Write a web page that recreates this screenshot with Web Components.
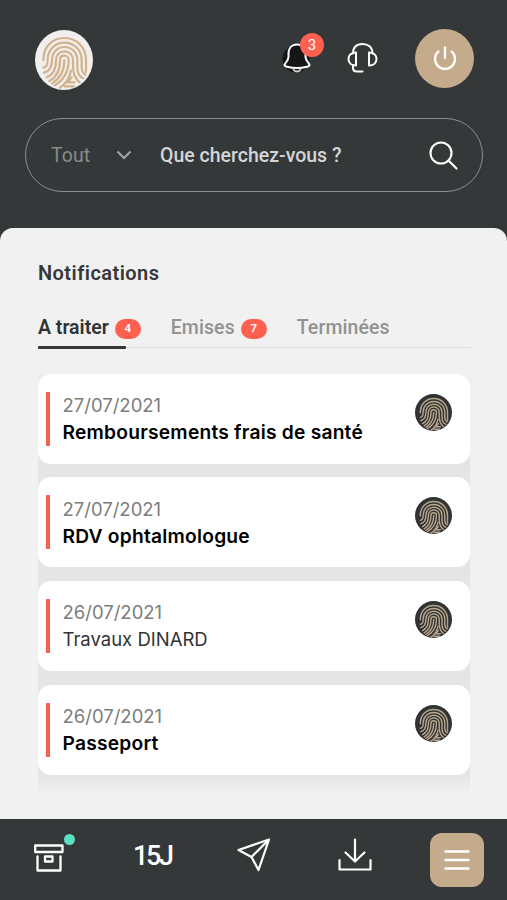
<!DOCTYPE html>
<html lang="fr">
<head>
<meta charset="utf-8">
<title>Notifications</title>
<style>
html,body{margin:0;height:100%}
body{background:#353839;font-family:Roboto,"Liberation Sans",sans-serif;overflow:hidden}
</style>
</head>
<body>
<portal-app></portal-app>
<script>
const define = (name, render) => customElements.define(name, class extends HTMLElement {
  constructor() {
    super();
    this.attachShadow({ mode: "open" });
  }
  connectedCallback() {
    this.shadowRoot.innerHTML = render(this);
  }
});

define("finger-print", () => `
<style>
:host{display:block;border-radius:50%;overflow:hidden;flex:none}
svg{display:block;width:100%;height:100%}
</style>
<svg viewBox="45 31 174 174" fill="none" stroke="var(--line)" stroke-width="6.6" stroke-linecap="round">
<path d="M70 119C70 80 95 52 133 52C170 52 198 80 198 118V154"/>
<path d="M70 141C80 140 83 132 83 118C83 88 105 66 133 66C162 66 185 88 185 118V138C185 150 188 157 196 162"/>
<path d="M72 156C90 152 96 138 96 118C96 96 112 79 133 79C155 79 172 96 172 118V140C172 158 178 168 189 173"/>
<path d="M80 170C102 162 108 140 108 118C108 102 119 92 133 92C148 92 159 103 159 118V136C159 160 166 175 179 185"/>
<path d="M88 181C114 168 120 145 120 118C120 109 126 105 133 105C141 105 146 111 146 118C146 150 136 175 104 194"/>
<path d="M133 118C133 150 122 172 97 188"/>
<path d="M153 150C148 175 136 190 120 201"/>
<path d="M155 170L142 185H164M134 197H162"/>
</svg>`);

define("count-badge", () => `
<style>
:host{display:flex;align-items:center;justify-content:center;background:#ff6050;color:#fff;border-radius:10px;width:26px;height:20px;font-size:11.5px;font-weight:600;line-height:1}
</style><slot></slot>`);

define("top-bar", () => `
<style>
:host{display:flex;align-items:center;padding:28px 33px 0 35px;height:60px}
finger-print{width:58px;height:60px;margin-top:3px;background:#f1efed;--line:#d2b18c}
.bell{position:relative;margin-left:188px;width:34px;height:34px}
.bell count-badge{position:absolute;left:19px;top:-8px;width:24px;height:24px;border-radius:50%;font-size:15px;font-weight:400}
.head{margin-left:32px;width:32px;height:32px}
svg{display:block}
.power{margin-left:auto;width:59px;height:59px;border-radius:50%;background:#c4ab8b;display:flex;align-items:center;justify-content:center}
</style>
<finger-print></finger-print>
<div class="bell">
<svg width="34" height="34" viewBox="0 0 34 34" fill="none" stroke="#fff" stroke-width="2" stroke-linecap="round" stroke-linejoin="round">
<circle cx="15" cy="18" r="13.5" fill="#141617" stroke="none"/>
<path fill="#141617" d="M16 3.5C10.5 3.5 7.5 7.5 7.5 12.500V16C7.500 19 4 22 3.500 24C3.500 25.500 9 27 16 27C23 27 28.500 25.500 28.500 24C28 22 24.500 19 24.500 16V12.500C24.500 7.500 21.500 3.500 16 3.500Z"/>
<path d="M12.500 28.500C13.500 31 18.500 31 19.500 28.500" stroke="#ccc"/>
</svg><count-badge>3</count-badge></div>
<svg class="head" viewBox="0 0 32 32" fill="none" stroke="#fff" stroke-width="2" stroke-linecap="round" stroke-linejoin="round">
<path d="M6 11.500C6 5 10 2 15.500 2C21 2 25.500 5 25.500 11.500"/>
<path d="M9 10.500V23.500C4.500 23.500 1.500 21 1.500 17C1.500 13 4.500 10.500 9 10.500Z"/>
<path d="M22 10.500V23.500C26.500 23.500 29.500 21 29.500 17C29.500 13 26.500 10.500 22 10.500Z"/>
<path d="M6 23V26Q6 29.500 10 29.500H15.500"/>
</svg>
<div class="power"><svg width="26" height="26" viewBox="0 0 26 26" fill="none" stroke="#fff" stroke-width="2.300" stroke-linecap="round"><path d="M13 2.500V13M6.400 6.400A10 10 0 1 0 19.600 6.400"/></svg></div>`);

define("search-box", () => `
<style>
:host{display:flex;align-items:center;box-sizing:border-box;margin:30px 24px 0 25px;height:74px;border:1px solid #8b8e8f;border-radius:37px;padding:0 24px 0 25px;font-size:19.500px;font-weight:500;color:#d3d6d6}
.scope{width:65px;color:#878b8c;letter-spacing:.1px;font-weight:400}
.q{margin-left:28px;letter-spacing:0}
.mag{margin-left:auto}
svg{display:block;flex:none}
</style>
<span class="scope">Tout</span>
<svg width="16" height="10" viewBox="0 0 16 10" fill="none" stroke="#a0a3a4" stroke-width="2.200"><path d="M1.500 1.500L8 8L14.500 1.500"/></svg>
<span class="q">Que cherchez-vous ?</span>
<svg class="mag" width="29" height="29" viewBox="0 0 29 29" fill="none" stroke="#fff" stroke-width="2.100" stroke-linecap="round"><circle cx="12" cy="12" r="10.500"/><path d="M19.500 19.500L27.500 27.500"/></svg>`);

define("tab-item", el => `
<style>
:host{display:flex;align-items:center;height:26px;padding-top:.5px;color:#929292;font-size:19.500px;font-weight:500;letter-spacing:.1px;white-space:nowrap}
:host([active]){color:#303334;font-weight:600;letter-spacing:0}
count-badge{margin:3px 0 0 6px;letter-spacing:0}
</style><slot></slot>${el.hasAttribute("count") ? `<count-badge>${el.getAttribute("count")}</count-badge>` : ""}`);

define("tab-bar", () => `
<style>
:host{display:block;margin-top:28px;width:433px}
.tabs{display:flex;height:32.500px}
.line{height:3px;display:flex;align-items:center}
.line::before{content:"";width:88px;height:2.500px;background:#353839;border-radius:1px}
.line::after{content:"";flex:1;height:1.300px;background:#dadada}
</style><div class="tabs"><slot></slot></div><div class="line"></div>`);

define("notice-card", el => `
<style>
:host{display:flex;box-sizing:border-box;height:90.300px;background:#fff;border-radius:13px;padding:18px 18px 0 8px;font-family:Inter,"Liberation Sans",sans-serif;font-size:18.500px}
.bar{width:4px;height:54px;background:#f4604d;border-radius:1px;margin-right:12.500px}
.text{flex:1;line-height:27px;color:#333;white-space:nowrap}
.date{color:#7c7c7c;padding-top:.500px}
:host([unread]) .title{font-weight:600;color:#000;font-size:19.200px;letter-spacing:.23px}
finger-print{width:37px;height:37px;margin-top:2px;background:#303234;--line:#b8a68b}
</style>
<div class="bar"></div>
<div class="text"><div class="date">${el.getAttribute("date")}</div><div class="title"><slot></slot></div></div>
<finger-print></finger-print>`);

define("notice-list", () => `
<style>
:host{display:flex;flex-direction:column;gap:13.400px;margin-top:24.500px;width:432px;height:420px;background:linear-gradient(#efefef 0,#e5e5e5 85px,#e5e5e5 402px,#f1f1f1 420px)}
</style><slot></slot>`);

define("bottom-nav", () => `
<style>
:host{display:flex;height:81px;background:#353839;box-sizing:border-box;padding-left:34px;color:#fff}
svg{display:block}
.box{position:relative;margin-top:25px}
.dot{position:absolute;left:30px;top:-10px;width:11px;height:11px;border-radius:50%;background:#59e0c3}
.j{margin:21px 0 0 69px;width:40px;font:500 27px/32px Roboto,sans-serif;white-space:nowrap;letter-spacing:-2.400px}
.send{margin:19px 0 0 64px}
.down{margin:19px 0 0 66.500px}
.menu{margin:14px 0 0 58px;width:54px;height:54px;border-radius:12px;background:#c4ab8b;display:flex;align-items:center;justify-content:center}
</style>
<div class="box"><svg width="30" height="29" viewBox="0 0 30 29" fill="none" stroke="#fff" stroke-width="2.300" stroke-linejoin="round" stroke-linecap="round"><path d="M1.200 1.500H28.500V8H1.200ZM3.500 12.500V26.500H26.500V12.500M11 12.500H18.500V17.500H11Z"/></svg><div class="dot"></div></div>
<div class="j">15J</div>
<svg class="send" width="34" height="35" viewBox="0 0 34 35" fill="none" stroke="#fff" stroke-width="2.200" stroke-linejoin="round"><path d="M32 1.500L1.500 12L14.500 19L21.500 32ZM32 1.500L14.500 19"/></svg>
<svg class="down" width="34" height="35" viewBox="0 0 34 35" fill="none" stroke="#fff" stroke-width="2.200" stroke-linecap="round" stroke-linejoin="round"><path d="M17 1.500V23M7.500 14.500L17 23.500L26.500 14.500M1.500 22V31.500H32.500V22"/></svg>
<div class="menu"><svg width="26" height="22" viewBox="0 0 26 22" stroke="#fff" stroke-width="2.400" stroke-linecap="round"><path d="M1.500 2.500H24.500M1.500 11H24.500M1.500 19.500H24.500"/></svg></div>`);

define("portal-app", () => `
<style>
:host{display:flex;flex-direction:column;width:507px;height:900px;background:#353839}
main{margin-top:36px;height:591px;box-sizing:border-box;background:#f1f1f1;border-radius:13px 13px 0 0;padding:32px 36px 0 38px}
h1{margin:0;padding-top:.5px;font-size:20px;line-height:25px;font-weight:600;letter-spacing:.45px;color:#353839}
</style>
<top-bar></top-bar>
<search-box></search-box>
<main>
<h1>Notifications</h1>
<tab-bar>
<tab-item active count="4">A traiter</tab-item>
<tab-item count="7" style="margin-left:30px">Emises</tab-item>
<tab-item style="margin-left:30px">Terminées</tab-item>
</tab-bar>
<notice-list>
<notice-card unread date="27/07/2021">Remboursements frais de santé</notice-card>
<notice-card unread date="27/07/2021">RDV ophtalmologue</notice-card>
<notice-card date="26/07/2021">Travaux DINARD</notice-card>
<notice-card unread date="26/07/2021">Passeport</notice-card>
</notice-list>
</main>
<bottom-nav></bottom-nav>`);
</script>
</body>
</html>
